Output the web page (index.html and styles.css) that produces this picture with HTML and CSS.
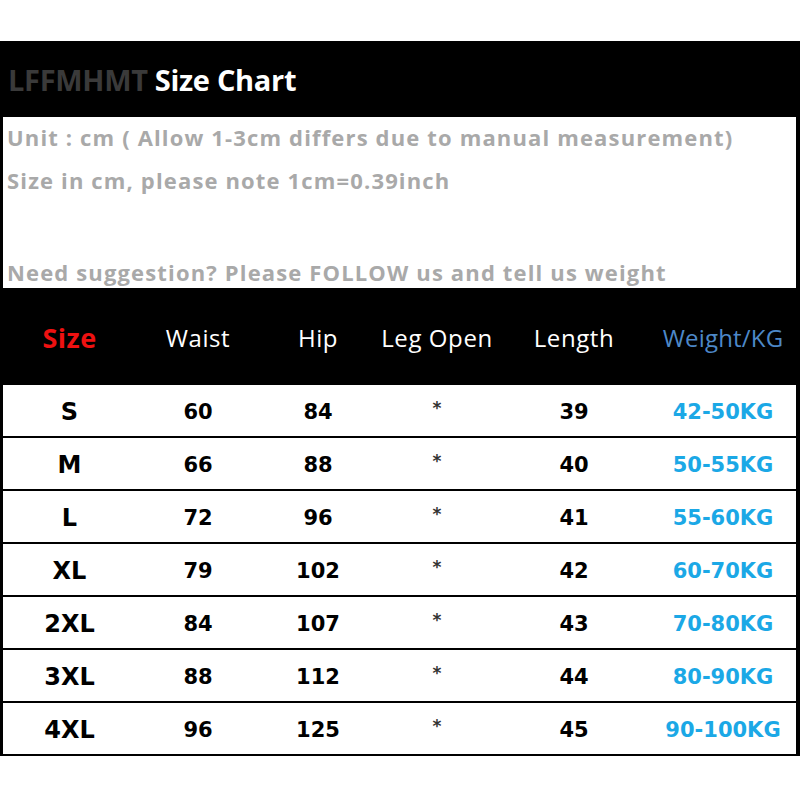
FILE: index.html
```html
<!DOCTYPE html>
<html>
<head>
<meta charset="utf-8">
<link rel="stylesheet" href="styles.css">
</head>
<body>
<div class="chart">
  <div class="title"><span class="brand">LFFMHMT</span><span class="title-main">Size Chart</span></div>
  <div class="info">
    <p class="l1">Unit : cm ( Allow 1-3cm differs due to manual measurement)</p>
    <p class="l2">Size in cm, please note 1cm=0.39inch</p>
    <p class="l3">Need suggestion? Please FOLLOW us and tell us weight</p>
  </div>
  <div class="row head">
    <div class="c size">Size</div>
    <div class="c">Waist</div>
    <div class="c">Hip</div>
    <div class="c">Leg Open</div>
    <div class="c">Length</div>
    <div class="c wt">Weight/KG</div>
  </div>
  <div class="row body"><div class="c">S</div><div class="c">60</div><div class="c">84</div><div class="c star">*</div><div class="c">39</div><div class="c kg">42-50KG</div></div>
  <div class="row body"><div class="c">M</div><div class="c">66</div><div class="c">88</div><div class="c star">*</div><div class="c">40</div><div class="c kg">50-55KG</div></div>
  <div class="row body"><div class="c">L</div><div class="c">72</div><div class="c">96</div><div class="c star">*</div><div class="c">41</div><div class="c kg">55-60KG</div></div>
  <div class="row body"><div class="c">XL</div><div class="c">79</div><div class="c">102</div><div class="c star">*</div><div class="c">42</div><div class="c kg">60-70KG</div></div>
  <div class="row body"><div class="c">2XL</div><div class="c">84</div><div class="c">107</div><div class="c star">*</div><div class="c">43</div><div class="c kg">70-80KG</div></div>
  <div class="row body"><div class="c">3XL</div><div class="c">88</div><div class="c">112</div><div class="c star">*</div><div class="c">44</div><div class="c kg">80-90KG</div></div>
  <div class="row body last"><div class="c">4XL</div><div class="c">96</div><div class="c">125</div><div class="c star">*</div><div class="c">45</div><div class="c kg">90-100KG</div></div>
</div>
</body>
</html>
```
FILE: styles.css
```css
html, body { margin: 0; padding: 0; background: #fff; }
.chart {
  margin-top: 41px;
  background: #000;
  padding: 0 4px 2px 3px;
  width: 793px;
}
.title {
  height: 76px;
  display: flex;
  align-items: center;
  gap: 7px;
  margin: 0 -4px 0 -3px;
  padding-left: 8px;
  font-family: "Open Sans", sans-serif;
  font-weight: 700;
  font-size: 29px;
  letter-spacing: -0.3px;
}
.brand { color: #3a3a3a; }
.title-main { color: #fff; }
.info {
  background: #fff;
  height: 171px;
  padding: 0 0 0 4px;
  font-family: "Open Sans", sans-serif;
  font-weight: 700;
  font-size: 22px;
  color: #a9a9a9;
  letter-spacing: 1.15px;
  display: flex;
  flex-direction: column;
}
.info p { margin: 0; line-height: 28px; }
.info .l1 { margin-top: 6px; }
.info .l2 { margin-top: 15px; }
.info .l3 { margin-top: auto; margin-bottom: 2px; }
.row {
  display: grid;
  grid-template-columns: 133px 124px 116px 122px 152px 146px;
  align-items: center;
}
.c { text-align: center; }
.head {
  height: 97px;
  color: #fff;
  font-family: "Open Sans", sans-serif;
  font-size: 24px;
  letter-spacing: 0.6px;
  padding-top: 2px;
  box-sizing: border-box;
}
.head .size { color: #ee1111; font-weight: 700; font-size: 27px; letter-spacing: 0.5px; }
.head .wt { color: #4d88c8; letter-spacing: 0.2px; }
.body {
  background: #fff;
  height: 51px;
  margin-bottom: 2px;
  padding-top: 3px;
  box-sizing: border-box;
  font-family: "DejaVu Sans", sans-serif;
  font-weight: 700;
  font-size: 21px;
  color: #000;
  letter-spacing: 0;
}
.body.last { margin-bottom: 0; }
.body .c:first-child { font-size: 24px; }
.body .kg { color: #1ba8e6; }
.body .star { font-size: 17px; color: #333; align-self: start; padding-top: 10px; }
```
